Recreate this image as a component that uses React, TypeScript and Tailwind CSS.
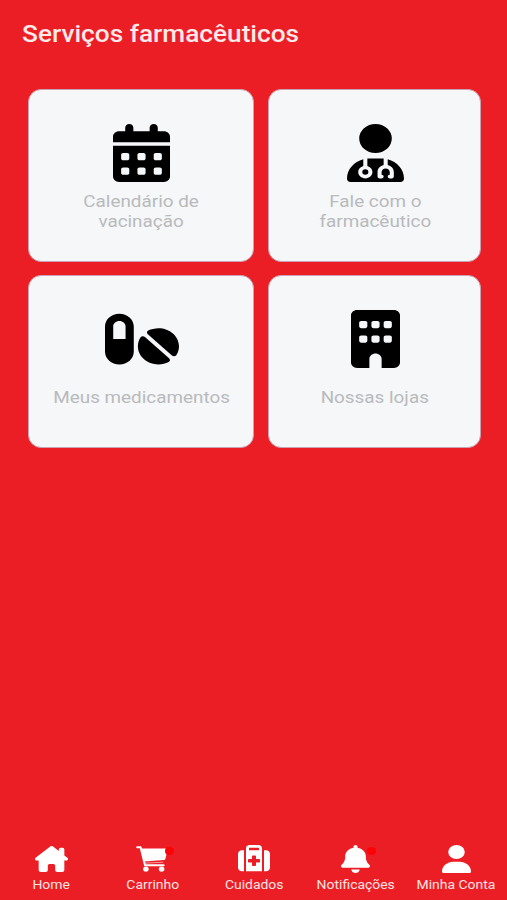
import React from 'react';
import {
  FaBell,
  FaBuilding,
  FaCalendarDays,
  FaHouseChimney,
  FaPills,
  FaSuitcaseMedical,
  FaUser,
  FaUserDoctor,
} from 'react-icons/fa6';

type Icon = React.ComponentType<React.SVGProps<SVGSVGElement>>;

interface Service {
  lines: string[];
  icon: Icon;
  iconClass: string;
  textClass: string;
}

interface Tab {
  label: string;
  icon: Icon;
  iconClass: string;
  badge?: string;
}

const CartIcon: Icon = props => (
  <svg viewBox="0 0 32 26" fill="currentColor" {...props}>
    <path d="M1.2 1.3h3.4L9 19.2h18.6" fill="none" stroke="currentColor" strokeWidth="2" strokeLinecap="round" strokeLinejoin="round" />
    <path d="M5.4 2.4H31a.8.8 0 0 1 .8 1L29.3 13a1.4 1.4 0 0 1-1.3 1.1L8.3 15.4z" />
    <path d="M8.4 17.2l18.9-1" fill="none" stroke="currentColor" strokeOpacity=".55" strokeWidth="1" />
    <ellipse cx="9.9" cy="23.1" rx="2.8" ry="2.6" />
    <ellipse cx="25.6" cy="23.1" rx="2.8" ry="2.6" />
  </svg>
);

const services: Service[] = [
  { lines: ['Calendário de', 'vacinação'], icon: FaCalendarDays, iconClass: 'w-[57px]', textClass: 'mt-[9px]' },
  { lines: ['Fale com o', 'farmacêutico'], icon: FaUserDoctor, iconClass: 'w-[57px]', textClass: 'mt-[9px]' },
  { lines: ['Meus medicamentos'], icon: FaPills, iconClass: 'w-[74px]', textClass: 'mt-[19px]' },
  { lines: ['Nossas lojas'], icon: FaBuilding, iconClass: 'w-[49px]', textClass: 'mt-[19px]' },
];

const tabs: Tab[] = [
  { label: 'Home', icon: FaHouseChimney, iconClass: 'w-[33px] h-[26px] mb-px' },
  { label: 'Carrinho', icon: CartIcon, iconClass: 'w-[32px] h-[26px] mb-px mr-px', badge: 'left-[32px]' },
  { label: 'Cuidados', icon: FaSuitcaseMedical, iconClass: 'w-[32px] h-[28px]' },
  { label: 'Notificações', icon: FaBell, iconClass: 'w-[29px] h-[28px]', badge: 'left-[32px]' },
  { label: 'Minha Conta', icon: FaUser, iconClass: 'w-[29px] h-[28px]' },
];

const ServiceCard: React.FC<{ service: Service }> = ({ service }) => {
  const Icon = service.icon;
  return (
    <button className="flex flex-col items-center rounded-[13px] border border-[#c9a3b4] bg-[#f5f7f9] pt-[34px] pl-px">
      <Icon preserveAspectRatio="none" className={`h-[58px] text-black ${service.iconClass}`} />
      <span className={`scale-x-[1.11] text-[17px] leading-5 whitespace-nowrap text-[#b9babc] ${service.textClass}`}>
        {service.lines.map(line => (
          <span key={line} className="block">{line}</span>
        ))}
      </span>
    </button>
  );
};

const TabItem: React.FC<{ tab: Tab }> = ({ tab }) => {
  const Icon = tab.icon;
  return (
    <button className="flex flex-col items-center">
      <span className="relative flex h-[28px] w-10 items-end justify-center">
        <Icon preserveAspectRatio="none" className={tab.iconClass} />
        {tab.badge && <span className={`absolute top-[2px] h-2 w-[9px] rounded-full bg-[#fd0207] ${tab.badge}`} />}
      </span>
      <span className="mt-1 scale-x-[1.16] text-xs leading-4 whitespace-nowrap text-[#ffe3e3]">{tab.label}</span>
    </button>
  );
};

export default function App() {
  return (
    <div className="flex h-[900px] w-[507px] flex-col overflow-hidden bg-[#ec1e25] font-['Roboto',sans-serif]">
      <h1 className="mt-[21px] ml-[22px] origin-left scale-x-[1.14] self-start text-[23px] leading-7 font-medium text-[#ffe9e9]">
        Serviços farmacêuticos
      </h1>

      <main className="mt-10 ml-7 grid grid-cols-[226px_213px] grid-rows-[173px_173px] gap-x-3.5 gap-y-[13px]">
        {services.map(service => (
          <ServiceCard key={service.lines[0]} service={service} />
        ))}
      </main>

      <nav className="mt-auto grid grid-cols-5 pb-[7px] pl-px text-white">
        {tabs.map(tab => (
          <TabItem key={tab.label} tab={tab} />
        ))}
      </nav>
    </div>
  );
}
